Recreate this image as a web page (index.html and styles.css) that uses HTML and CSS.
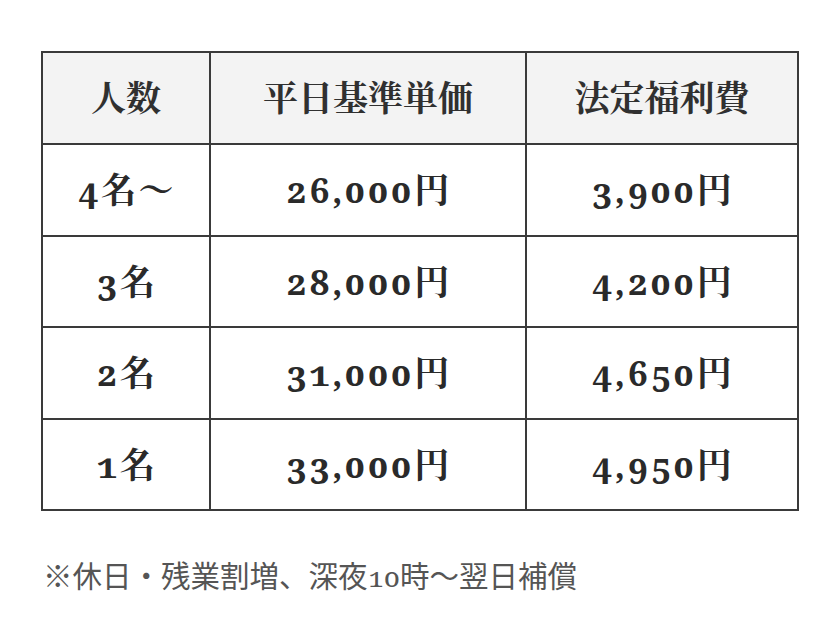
FILE: index.html
```html
<!DOCTYPE html>
<html lang="ja">
<head>
<meta charset="utf-8">
<title>料金表</title>
<link rel="stylesheet" href="styles.css">
</head>
<body>
<div class="page">
  <table class="price">
    <colgroup>
      <col class="c1">
      <col class="c2">
      <col class="c3">
    </colgroup>
    <thead>
      <tr class="head">
        <th>人数</th>
        <th>平日基準単価</th>
        <th>法定福利費</th>
      </tr>
    </thead>
    <tbody>
      <tr><td>4名～</td><td>26,000円</td><td>3,900円</td></tr>
      <tr><td>3名</td><td>28,000円</td><td>4,200円</td></tr>
      <tr><td>2名</td><td>31,000円</td><td>4,650円</td></tr>
      <tr><td>1名</td><td>33,000円</td><td>4,950円</td></tr>
    </tbody>
  </table>
  <p class="note">※休日・残業割増、深夜<span class="num">10</span>時～翌日補償</p>
</div>
</body>
</html>
```
FILE: styles.css
```css
html, body {
  margin: 0;
  padding: 0;
  background: #ffffff;
}

.page {
  padding: 51px 0 0 41px;
}

.price {
  border-collapse: collapse;
  table-layout: fixed;
  width: 756px;
  font-family: "Noto Serif", "DejaVu Serif", "Noto Serif CJK JP", "Noto Sans CJK JP", serif;
  font-variant-numeric: oldstyle-nums;
  font-weight: 700;
  font-size: 35px;
  color: #2a2a2a;
}

.c1 { width: 168px; }
.c2 { width: 316px; }
.c3 { width: 272px; }

.price th,
.price td {
  border: 2px solid #3a3a3a;
  padding: 0;
  text-align: center;
  vertical-align: middle;
}

.price td {
  padding: 0 0 3px 2px;
  letter-spacing: 2.5px;
}

.price th {
  background: #f3f3f3;
  font-family: "Noto Serif CJK JP", "Noto Sans CJK JP", serif;
  font-size: 35px;
  font-weight: 700;
  color: #303030;
  padding-bottom: 4px;
}

.head { height: 92px; }
.price tbody tr { height: 91.5px; }

.note {
  margin: 43px 0 0 2px;
  font-family: "Noto Sans CJK JP", sans-serif;
  font-size: 29.5px;
  font-weight: 400;
  color: #555555;
  line-height: 40px;
}

.note .num {
  font-family: "Noto Serif", "DejaVu Serif", serif;
  font-variant-numeric: oldstyle-nums;
  font-size: 28px;
}
```
